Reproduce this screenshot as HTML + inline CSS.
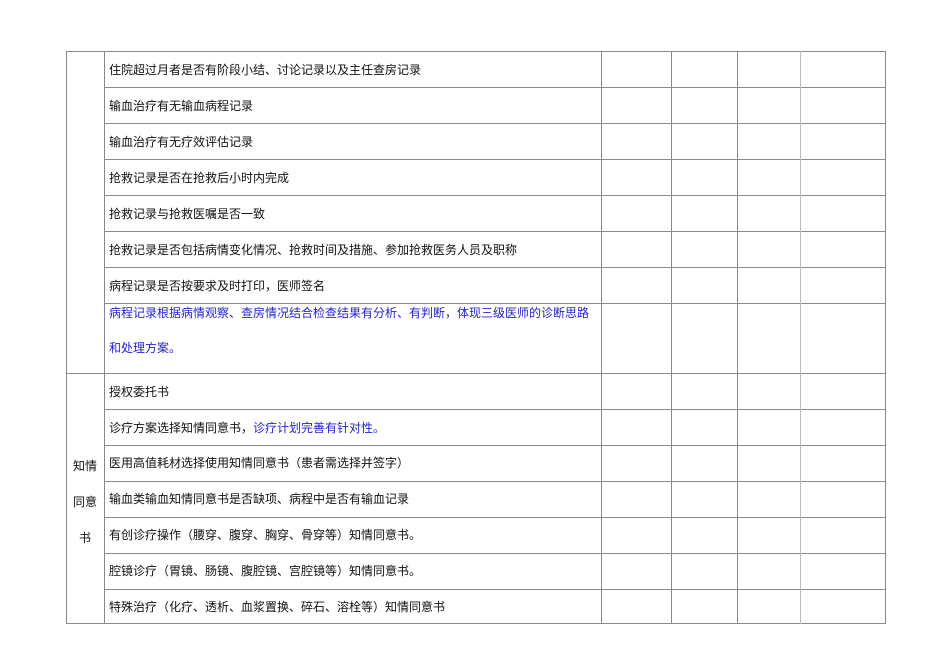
<!DOCTYPE html>
<html><head><meta charset="utf-8"><style>
body{margin:0;width:950px;height:672px;background:#fff;position:relative;overflow:hidden;font-family:"Liberation Sans","Noto Sans CJK SC",sans-serif;font-size:12px;color:#111}
.h{position:absolute;height:1px;background:#888}
.v{position:absolute;width:1px;background:#888}
.t{position:absolute;left:109px;white-space:nowrap;line-height:14px}
.b{color:#2424d0}
</style></head><body>
<div class="h" style="left:66px;width:820px;top:51px"></div>
<div class="h" style="left:104px;width:782px;top:87px"></div>
<div class="h" style="left:104px;width:782px;top:123px"></div>
<div class="h" style="left:104px;width:782px;top:159px"></div>
<div class="h" style="left:104px;width:782px;top:195px"></div>
<div class="h" style="left:104px;width:782px;top:231px"></div>
<div class="h" style="left:104px;width:782px;top:267px"></div>
<div class="h" style="left:104px;width:782px;top:303px"></div>
<div class="h" style="left:66px;width:820px;top:373px"></div>
<div class="h" style="left:104px;width:782px;top:409px"></div>
<div class="h" style="left:104px;width:782px;top:445px"></div>
<div class="h" style="left:104px;width:782px;top:481px"></div>
<div class="h" style="left:104px;width:782px;top:517px"></div>
<div class="h" style="left:104px;width:782px;top:553px"></div>
<div class="h" style="left:104px;width:782px;top:589px"></div>
<div class="h" style="left:66px;width:820px;top:623px"></div>
<div class="v" style="left:66px;top:51px;height:573px"></div>
<div class="v" style="left:104px;top:51px;height:573px"></div>
<div class="v" style="left:601px;top:51px;height:573px"></div>
<div class="v" style="left:671px;top:51px;height:573px"></div>
<div class="v" style="left:737px;top:51px;height:573px"></div>
<div class="v" style="left:800px;top:51px;height:573px;background:#bbb"></div>
<div class="v" style="left:885px;top:51px;height:573px"></div>

<div class="t" style="top:63px">住院超过月者是否有阶段小结、讨论记录以及主任查房记录</div>
<div class="t" style="top:99px">输血治疗有无输血病程记录</div>
<div class="t" style="top:135px">输血治疗有无疗效评估记录</div>
<div class="t" style="top:171px">抢救记录是否在抢救后小时内完成</div>
<div class="t" style="top:207px">抢救记录与抢救医嘱是否一致</div>
<div class="t" style="top:243px">抢救记录是否包括病情变化情况、抢救时间及措施、参加抢救医务人员及职称</div>
<div class="t" style="top:279px">病程记录是否按要求及时打印，医师签名</div>
<div class="t b" style="top:306px">病程记录根据病情观察、查房情况结合检查结果有分析、有判断，体现三级医师的诊断思路</div>
<div class="t b" style="top:341px">和处理方案。</div>
<div class="t" style="top:385px">授权委托书</div>
<div class="t" style="top:421px">诊疗方案选择知情同意书，<span class="b">诊疗计划完善有针对性。</span></div>
<div class="t" style="top:456px">医用高值耗材选择使用知情同意书（患者需选择并签字）</div>
<div class="t" style="top:492px">输血类输血知情同意书是否缺项、病程中是否有输血记录</div>
<div class="t" style="top:528px">有创诊疗操作（腰穿、腹穿、胸穿、骨穿等）知情同意书。</div>
<div class="t" style="top:564px">腔镜诊疗（胃镜、肠镜、腹腔镜、宫腔镜等）知情同意书。</div>
<div class="t" style="top:600px">特殊治疗（化疗、透析、血浆置换、碎石、溶栓等）知情同意书</div>

<div style="position:absolute;left:66px;width:38px;text-align:center;top:448px;line-height:36px">知情<br>同意<br>书</div>
</body></html>
